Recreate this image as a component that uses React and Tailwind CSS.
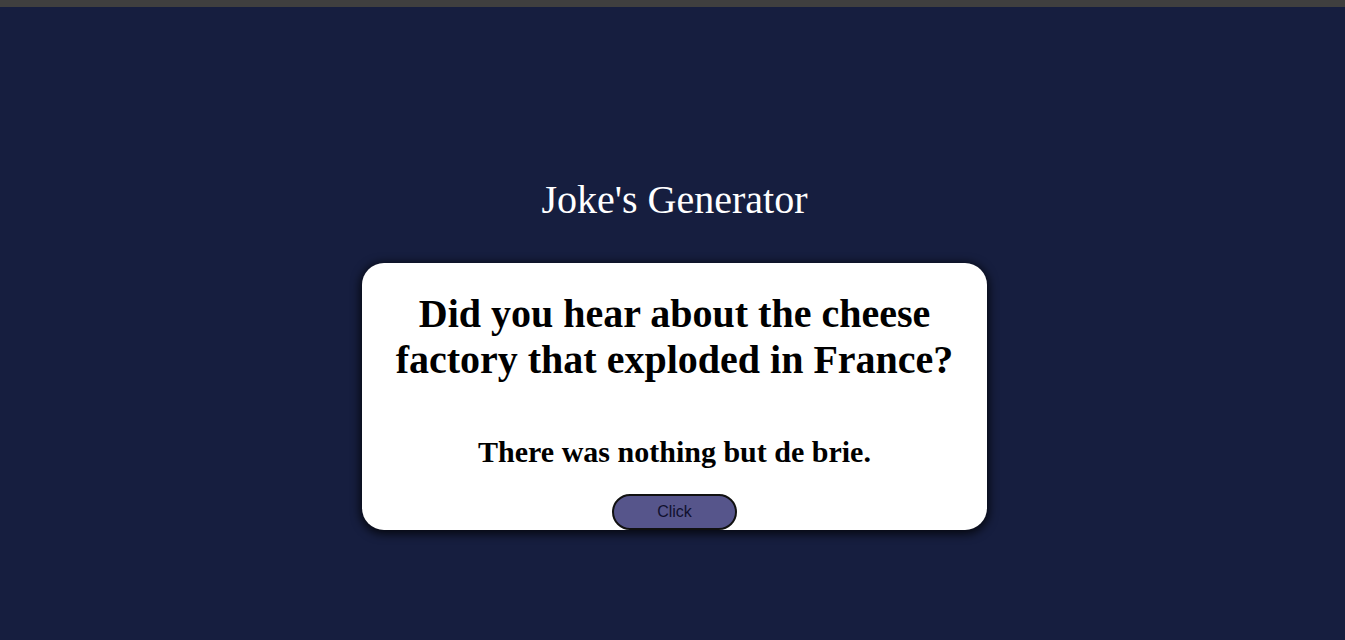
import React, { useState } from "react";

const jokes = [
  {
    setup: "Did you hear about the cheese factory that exploded in France?",
    punchline: "There was nothing but de brie.",
  },
];

const App = () => {
  const [joke] = useState(jokes[0]);

  return (
    <div className="min-h-screen bg-[#161e3f] font-['Liberation_Serif',serif]">
      {/* top bar */}
      <div className="h-[7px] bg-[#3f3f3f]" />

      <main className="flex flex-col items-center pt-[170px] pl-[4px]">
        <h1 className="text-[40px] leading-[46px] text-white">Joke's Generator</h1>

        <div className="mt-[40px] w-[625px] h-[267px] bg-white rounded-[22px] shadow-[0_2px_10px_2px_rgba(0,0,0,0.75)] flex flex-col items-center text-center">
          <h2 className="mt-[28px] px-[28px] text-[40px] leading-[46px] font-bold text-black">
            {joke.setup}
          </h2>
          <p className="mt-[52px] text-[30px] leading-[34px] font-bold text-black">
            {joke.punchline}
          </p>
          <button className="mt-[25px] w-[125px] h-[36px] rounded-full bg-[#56558b] border-2 border-[#111] text-[16px] text-[#10102e] font-['Liberation_Sans',Arial,sans-serif]">
            Click
          </button>
        </div>
      </main>
    </div>
  );
};

export default App;
